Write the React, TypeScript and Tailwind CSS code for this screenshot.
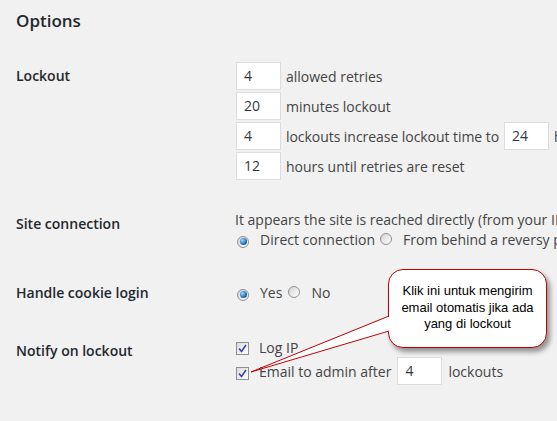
import React from "react";

function Field({ value, className = "" }: { value: string; className?: string }) {
  return (
    <div
      className={`h-[28px] w-[45px] shrink-0 border border-[#dddddd] bg-white pl-[7px] leading-[26px] text-[#32373c] ${className}`}
    >
      {value}
    </div>
  );
}

function Radio({ checked }: { checked?: boolean }) {
  return (
    <span className="inline-grid h-[12px] w-[12px] shrink-0 place-items-center rounded-full border border-[#8f8f8f] bg-[linear-gradient(135deg,#d4d4d4,#ffffff)]">
      {checked && (
        <span className="h-[7px] w-[7px] rounded-full bg-[radial-gradient(circle_at_35%_35%,#9adcff,#1366b0_65%,#0a4c8c)]" />
      )}
    </span>
  );
}

function Check() {
  return (
    <span className="inline-grid h-[13px] w-[13px] shrink-0 place-items-center border border-[#8e8f8f] bg-[linear-gradient(135deg,#dcdcdc,#ffffff)]">
      <svg width="9" height="9" viewBox="0 0 9 9">
        <path d="M1 4.5 L3.5 7.5 L8 1" fill="none" stroke="#3646a8" strokeWidth="1.6" />
      </svg>
    </span>
  );
}

export default function App() {
  return (
    <div className="relative h-[421px] w-[557px] overflow-hidden whitespace-nowrap bg-[#f1f1f1] pl-4 font-['Open_Sans',sans-serif] text-[14px] text-[#444444]">
      <h2 className="pt-[8px] text-[17px] font-semibold leading-[26px] text-[#23282d]">Options</h2>

      {/* Lockout */}
      <div className="mt-[28px] grid grid-cols-[220px_1fr]">
        <div className="font-semibold leading-[28px] text-[#23282d]">Lockout</div>
        <div className="flex flex-col gap-[2px]">
          <div className="flex items-center gap-[5px]">
            <Field value="4" />
            <span>allowed retries</span>
          </div>
          <div className="flex items-center gap-[5px]">
            <Field value="20" />
            <span>minutes lockout</span>
          </div>
          <div className="flex items-center gap-[5px]">
            <Field value="4" />
            <span className="tracking-[-0.05px]">lockouts increase lockout time to</span>
            <Field value="24" />
            <span>hours</span>
          </div>
          <div className="flex items-center gap-[5px]">
            <Field value="12" />
            <span>hours until retries are reset</span>
          </div>
        </div>
      </div>

      {/* Site connection */}
      <div className="mt-[30px] grid grid-cols-[220px_1fr]">
        <div className="pt-[4px] font-semibold leading-[20px] text-[#23282d]">Site connection</div>
        <div className="leading-[20px]">
          <div className="-ml-[1px]">It appears the site is reached directly (from your IP: 127.0.0.1)</div>
          <div className="flex items-center">
            <span className="ml-[1px] mr-[11px]"><Radio checked /></span>
            <span>Direct connection</span>
            <span className="ml-[5px] mr-[11px]"><Radio /></span>
            <span>From behind a reversy proxy</span>
          </div>
        </div>
      </div>

      {/* Handle cookie login */}
      <div className="mt-[33px] grid grid-cols-[220px_1fr]">
        <div className="font-semibold leading-[20px] text-[#23282d]">Handle cookie login</div>
        <div className="flex items-center leading-[20px]">
          <span className="ml-[1px] mr-[11px]"><Radio checked /></span>
          <span>Yes</span>
          <span className="ml-[6px] mr-[11px]"><Radio /></span>
          <span>No</span>
        </div>
      </div>

      {/* Notify on lockout */}
      <div className="mt-[34px] grid grid-cols-[220px_1fr]">
        <div className="pt-[4px] font-semibold leading-[20px] text-[#23282d]">Notify on lockout</div>
        <div>
          <div className="flex h-[20px] items-center">
            <span className="mr-[10px]"><Check /></span>
            <span>Log IP</span>
          </div>
          <div className="flex h-[28px] items-center">
            <span className="mr-[10px] mt-[2px]"><Check /></span>
            <span>Email to admin after</span>
            <Field value="4" className="ml-[6px] mr-[6px]" />
            <span>lockouts</span>
          </div>
        </div>
      </div>

      {/* Callout */}
      <div className="absolute left-[388px] top-[269px] flex h-[79px] w-[159px] items-center justify-center rounded-[15px] border border-[#c00000] bg-white pb-[1px] text-center font-['Liberation_Sans',Arial,sans-serif] text-[13px] leading-[16.5px] text-black shadow-[3px_4px_5px_rgba(0,0,0,0.4)]">
        Klik ini untuk mengirim
        <br />
        email otomatis jika ada
        <br />
        yang di lockout
      </div>
      <svg className="pointer-events-none absolute left-0 top-0" width="557" height="421">
        <polygon points="251,372 391,316 391,331" fill="#ffffff" />
        <line x1="251" y1="372" x2="389" y2="316" stroke="#c00000" strokeWidth="1" />
        <line x1="251" y1="372" x2="389" y2="331" stroke="#c00000" strokeWidth="1" />
      </svg>
    </div>
  );
}
